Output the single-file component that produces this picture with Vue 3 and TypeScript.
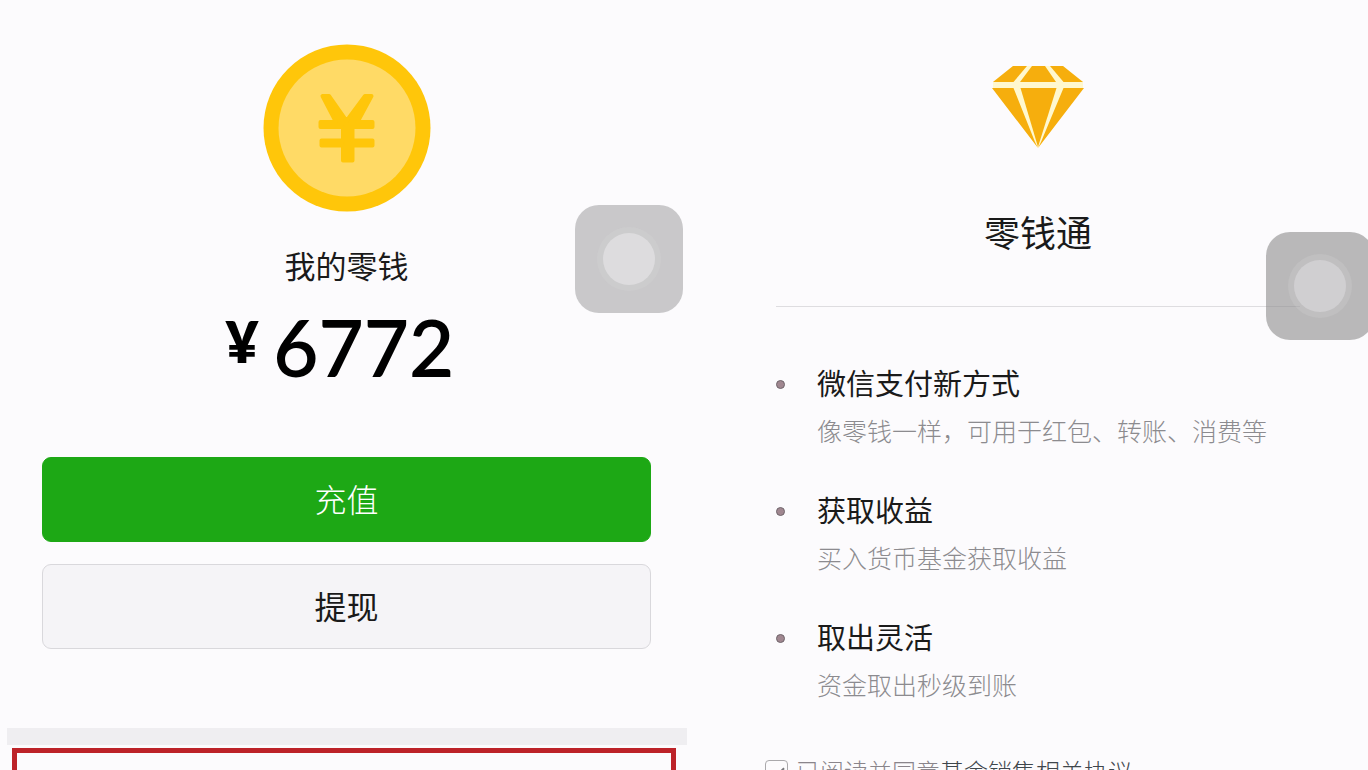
<script setup lang="ts">
interface Feature {
  title: string
  detail: string
}

const balance = 6772

const features: Feature[] = [
  { title: '微信支付新方式', detail: '像零钱一样，可用于红包、转账、消费等' },
  { title: '获取收益', detail: '买入货币基金获取收益' },
  { title: '取出灵活', detail: '资金取出秒级到账' },
]
</script>

<template>
  <main class="page">
    <section class="wallet">
      <svg class="coin" viewBox="0 0 168 168" aria-hidden="true">
        <circle cx="84" cy="84" r="83.5" fill="#ffc60a" />
        <circle cx="84" cy="84" r="68.5" fill="#ffda66" />
        <g fill="#ffc60a" stroke="#ffc60a" stroke-width="4" stroke-linejoin="round">
          <path d="M59.5 52H66L83.500 77L102 52H108.500L94.500 78H109.500V83H89.500V96.500H109.500V101.500H89.500V116.500H80V101.500H58.500V96.500H80V83H57.500V78H73Z" />
        </g>
      </svg>
      <h1 class="wallet-title">我的零钱</h1>
      <p class="amount"><span class="currency">¥</span><span>{{ balance }}</span></p>
      <div class="actions">
        <button class="action primary" type="button">充值</button>
        <button class="action" type="button">提现</button>
      </div>
      <div class="band"></div>
      <div class="highlight"></div>
      <button class="assist" type="button" aria-label="AssistiveTouch"><span class="knob"></span></button>
    </section>

    <section class="fund">
      <header class="fund-head">
        <svg class="gem" viewBox="0 0 92 84" aria-hidden="true">
          <path d="M21 1H71L91 17V22.500L46 83L1 22.500V17Z" fill="#fff8cf" />
          <g fill="#f6ae0d">
            <path d="M21 1H35L21.500 17H1Z" />
            <path d="M40 1H53L64 17H28Z" />
            <path d="M58 1H71L91 17H71.500Z" />
            <path d="M0 23H21.500L43 77L46 83Z" />
            <path d="M28.500 23H64.500L46 82Z" />
            <path d="M71.500 23H92L46 83L49 77Z" />
          </g>
        </svg>
        <h2 class="fund-title">零钱通</h2>
      </header>
      <ul class="features">
        <li v-for="item in features" :key="item.title" class="feature">
          <h3 class="feature-title">{{ item.title }}</h3>
          <p class="feature-detail">{{ item.detail }}</p>
        </li>
      </ul>
      <div class="agreement">
        <input id="agree" class="agree-box" type="checkbox" checked />
        <label for="agree">已阅读并同意</label><a href="#">基金销售相关协议</a>
      </div>
      <button class="assist edge" type="button" aria-label="AssistiveTouch"><span class="knob"></span></button>
    </section>
  </main>
</template>

<style>
body {
  margin: 0;
  background: #fcfbfd;
}
</style>

<style scoped>
.page {
  display: grid;
  grid-template-columns: 693fr 675fr;
  height: 100vh;
  overflow: hidden;
  background: #fcfbfd;
  color: #1a1a1a;
  font-family: "Noto Sans CJK SC", sans-serif;
}

h1,
h2,
h3,
p,
ul {
  margin: 0;
  padding: 0;
  font-weight: 400;
}

.wallet,
.fund {
  position: relative;
}

.wallet {
  display: flex;
  flex-direction: column;
  align-items: center;
  padding-top: 44px;
}

.coin {
  width: 168px;
  height: 168px;
  flex: none;
}

.wallet-title {
  margin-top: 33px;
  font-size: 31px;
  line-height: 40px;
}

.amount {
  display: flex;
  align-items: flex-start;
  gap: 15px;
  margin: 20px 13px 0 0;
  color: #000;
  font-family: Lato, sans-serif;
  font-size: 78px;
  font-weight: 600;
  line-height: 84px;
}

.currency {
  font-size: 56px;
  font-weight: 800;
  line-height: 74px;
}

.actions {
  display: flex;
  flex-direction: column;
  align-self: stretch;
  gap: 22px;
  margin: 68px 42px 0;
}

.action {
  height: 85px;
  padding: 0 0 4px;
  border: 1px solid #d9d8dc;
  border-radius: 9px;
  background: #f5f4f7;
  color: #1a1a1a;
  font: 400 32px "Noto Sans CJK SC", sans-serif;
}

.primary {
  border-color: #1da815;
  background: #1da815;
  color: #fff;
  font-weight: 300;
}

.band {
  align-self: stretch;
  flex: none;
  height: 17px;
  margin: 79px 6px 0 7px;
  background: #efeef1;
}

.highlight {
  align-self: stretch;
  flex: none;
  height: 120px;
  margin: 3px 17px 0 12px;
  box-sizing: border-box;
  border: 5px solid #bd2329;
}

.assist {
  position: absolute;
  top: 205px;
  right: 10px;
  display: grid;
  place-items: center;
  width: 108px;
  height: 108px;
  padding: 0;
  border: 0;
  border-radius: 24px;
  background: rgba(150, 149, 151, 0.5);
}

.edge {
  top: 232px;
  right: -6px;
  background: rgba(140, 140, 140, 0.6);
}

.knob {
  width: 52px;
  height: 52px;
  border-radius: 50%;
  background: #dddcde;
  box-shadow: 0 0 0 6px rgba(221, 220, 222, 0.2);
}

.edge .knob {
  background: #d0cfd1;
}

.fund {
  padding: 65px 68px 0 83px;
}

.fund-head {
  display: flex;
  flex-direction: column;
  align-items: center;
  padding-bottom: 51px;
  border-bottom: 1px solid #dedde0;
}

.gem {
  width: 92px;
  height: 84px;
}

.fund-title {
  margin-top: 58px;
  font-size: 36px;
  line-height: 48px;
}

.features {
  display: flex;
  flex-direction: column;
  gap: 45px;
  margin-top: 57px;
  list-style: none;
}

.feature {
  display: grid;
  grid-template-columns: 41px 1fr;
  row-gap: 14px;
  align-items: center;
}

.feature::before {
  content: "";
  width: 7px;
  height: 7px;
  margin-top: 4px;
  border: 1px solid #6f656b;
  border-radius: 50%;
  background: #a08790;
}

.feature-title {
  font-size: 29px;
  line-height: 36px;
}

.feature-detail {
  grid-column: 2;
  color: #8c8b8f;
  font-size: 25px;
  font-weight: 300;
  line-height: 32px;
  white-space: nowrap;
}

.agreement {
  display: flex;
  align-items: center;
  margin: 55px 0 0 -11px;
  color: #8a858b;
  font-size: 24px;
  font-weight: 300;
  line-height: 32px;
  white-space: nowrap;
}

.agreement a {
  color: #3f464c;
  text-decoration: none;
}

.agree-box {
  appearance: none;
  display: grid;
  place-items: center;
  width: 23px;
  height: 23px;
  margin: 0 8px 0 0;
  border: 1px solid #aaa9ac;
  border-radius: 4px;
}

.agree-box::before {
  content: "";
  width: 12px;
  height: 6px;
  border: solid #77767a;
  border-width: 0 0 2px 2px;
  transform: rotate(-45deg);
}
</style>
